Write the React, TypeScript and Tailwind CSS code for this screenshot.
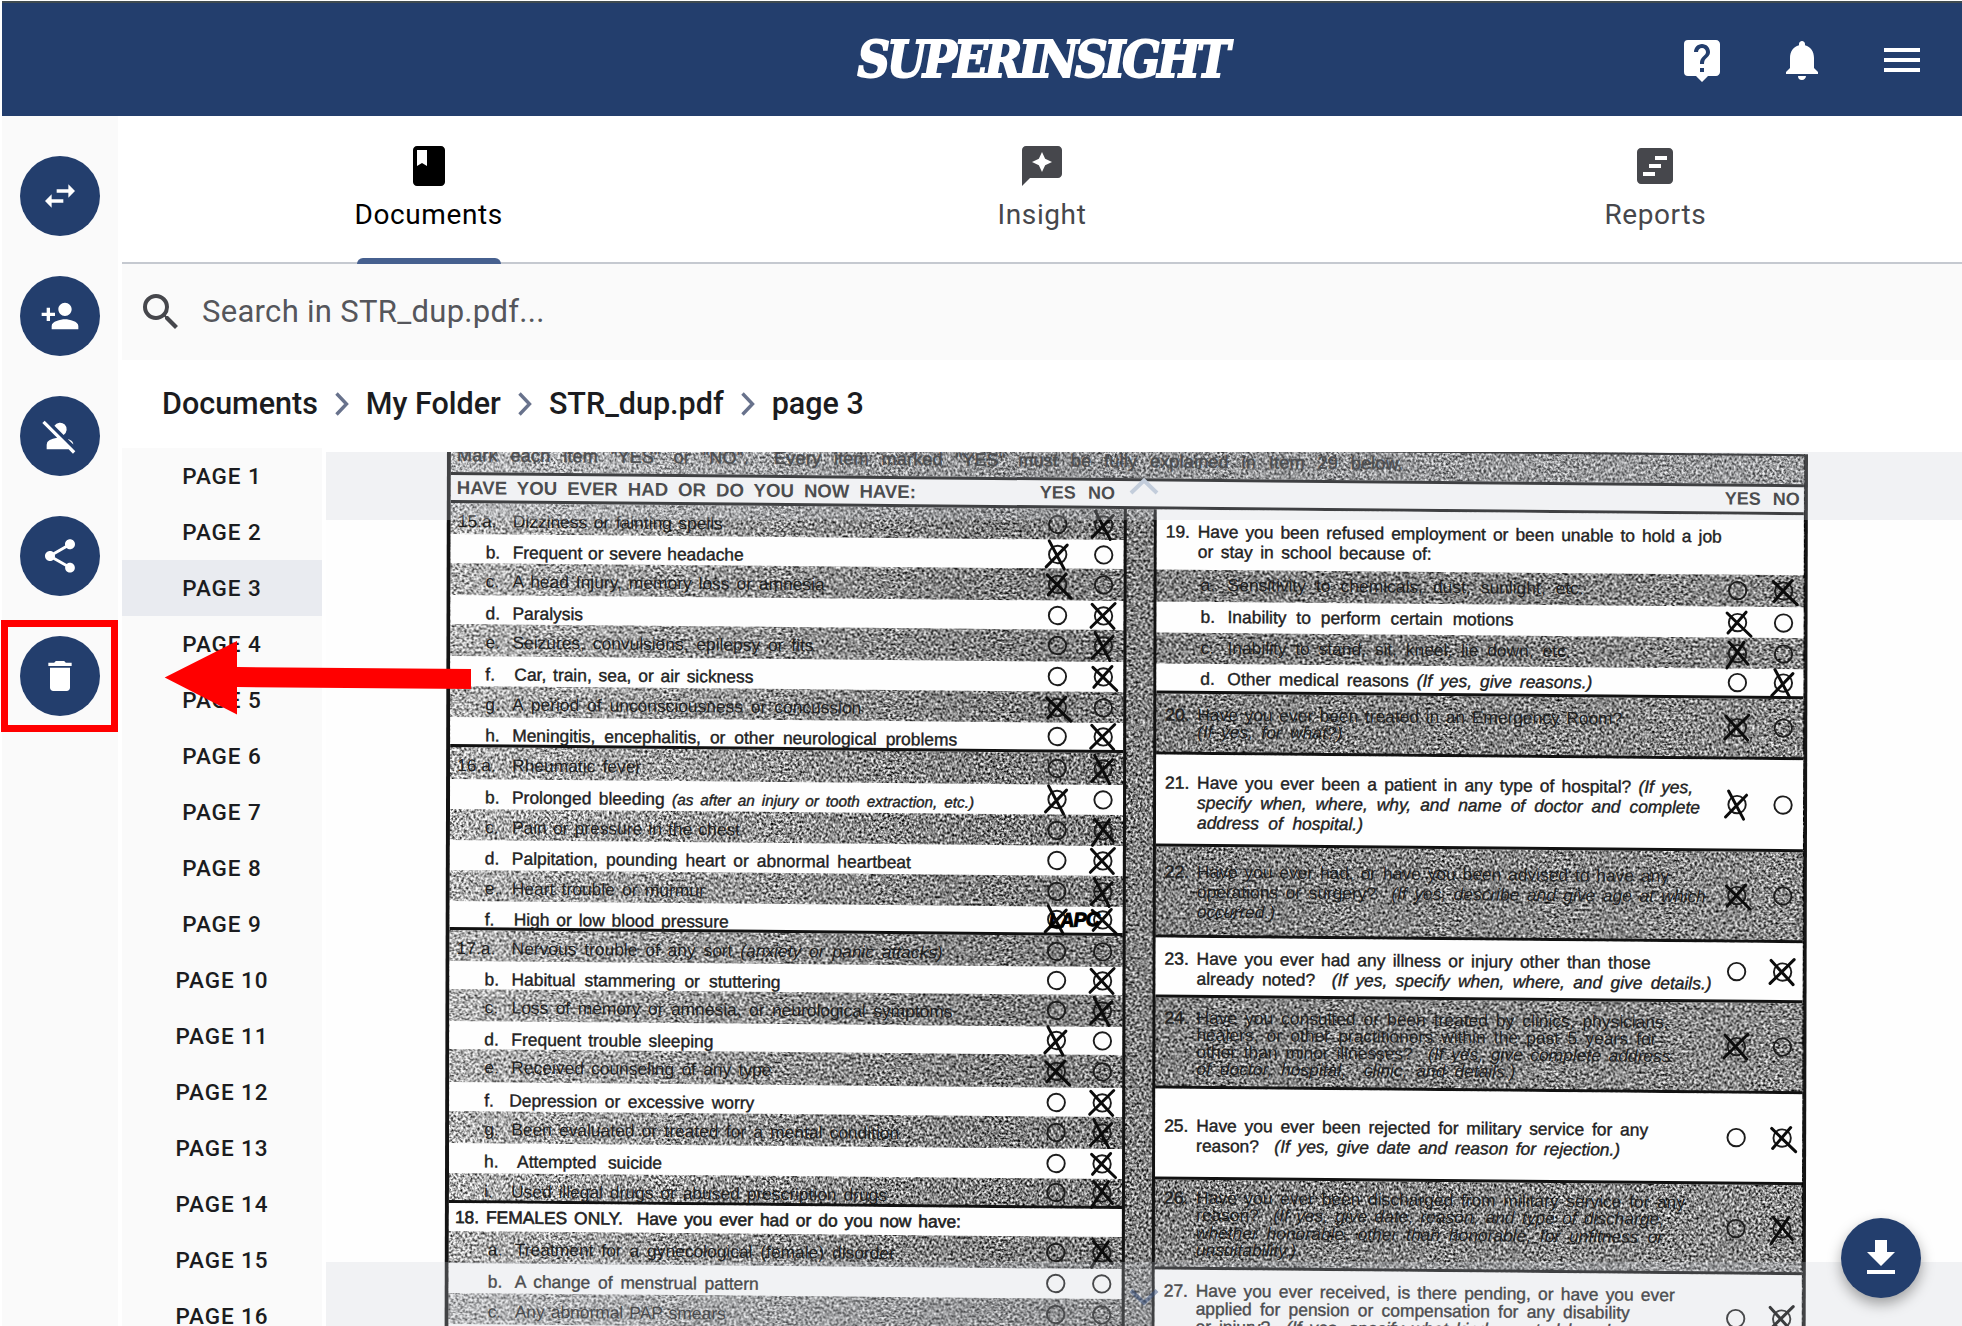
import React from "react";
import {
  MdBook,
  MdDelete,
  MdLiveHelp,
  MdMenu,
  MdNotifications,
  MdPersonAdd,
  MdPersonOff,
  MdSearch,
  MdShare,
  MdSwapHoriz,
} from "react-icons/md";

/* ---------- shell ---------- */

function Header() {
  return (
    <header className="grid h-[115px] shrink-0 grid-cols-[1fr_auto_1fr] items-center border-t-2 border-[#404b50] bg-[#233e6d] text-white">
      <span />
      <h1 className="ml-[120px] flex w-[440px] justify-center font-['DejaVu_Serif'] text-[50px] leading-none font-bold italic [-webkit-text-stroke:2px_white]">
        <span className="scale-x-[0.9] tracking-[-0.07em]">SUPERINSIGHT</span>
      </h1>
      <nav className="flex justify-end gap-[52px] pr-[36px]">
        <MdLiveHelp size={48} />
        <MdNotifications size={48} />
        <MdMenu size={48} />
      </nav>
    </header>
  );
}

const railIcons = [MdSwapHoriz, MdPersonAdd, MdPersonOff, MdShare, MdDelete];

function Rail() {
  return (
    <aside className="flex w-[116px] shrink-0 flex-col items-center gap-10 bg-[#fafafa] pt-10">
      {railIcons.map((Icon, i) => (
        <button key={i} className="flex size-20 items-center justify-center rounded-full bg-[#233e6d] text-white">
          <Icon size={40} />
        </button>
      ))}
    </aside>
  );
}

const InsightIcon = () => (
  <svg width="48" height="48" viewBox="0 0 24 24" fill="currentColor" fillRule="evenodd">
    <path d="M20 2H4c-1.1 0-2 .9-2 2v18l4-4h14c1.1 0 2-.9 2-2V4c0-1.1-.9-2-2-2zm-6.43 9.57L12 15l-1.57-3.43L7 10l3.43-1.57L12 5l1.57 3.43L17 10l-3.43 1.57z" />
  </svg>
);

const ReportsIcon = () => (
  <svg width="48" height="48" viewBox="0 0 24 24" fill="currentColor" fillRule="evenodd">
    <path d="M19 3H5c-1.1 0-2 .9-2 2v14c0 1.1.9 2 2 2h14c1.1 0 2-.9 2-2V5c0-1.1-.9-2-2-2zM12 17H6v-2h6v2zm3-4H9v-2h6v2zm3-4h-6V7h6v2z" />
  </svg>
);

function Tabs() {
  return (
    <div className="grid h-[148px] grid-cols-3 border-b-2 border-[#c5c9d0] bg-white text-[28px] leading-10 tracking-[0.6px] text-[#46474c]">
      <div className="relative flex flex-col items-center pt-[26px] text-black">
        <MdBook size={48} />
        <span className="mt-[5px]">Documents</span>
        <span className="absolute -bottom-0.5 h-1.5 w-[144px] rounded-t-md bg-[#46608f]" />
      </div>
      <div className="flex flex-col items-center pt-[26px]">
        <InsightIcon />
        <span className="mt-[5px]">Insight</span>
      </div>
      <div className="flex flex-col items-center pt-[26px]">
        <ReportsIcon />
        <span className="mt-[5px]">Reports</span>
      </div>
    </div>
  );
}

const Chevron = () => (
  <svg width="14" height="24" viewBox="0 0 14 24" fill="none" stroke="#68728c" strokeWidth="3.4">
    <path d="M1.5 1.5 11.5 12 1.5 22.5" />
  </svg>
);

function Breadcrumbs() {
  const items = ["Documents", "My Folder", "STR_dup.pdf", "page 3"];
  return (
    <div className="flex h-[88px] items-center gap-[17px] bg-white pl-[40px] text-[30.5px] font-medium text-[#1b1c20]">
      {items.map((t, i) => (
        <React.Fragment key={t}>
          {i > 0 && <Chevron />}
          <span>{t}</span>
        </React.Fragment>
      ))}
    </div>
  );
}

function PageList() {
  return (
    <ul className="w-[200px] shrink-0 bg-[#fafafa] text-center text-[22.5px] font-medium tracking-[0.9px] text-[#1b1c20]">
      {Array.from({ length: 16 }, (_, i) => (
        <li key={i} className={i === 2 ? "h-14 bg-[#e9ebf0] leading-[57px]" : "h-14 leading-[57px]"}>
          PAGE {i + 1}
        </li>
      ))}
    </ul>
  );
}

/* ---------- scanned form ---------- */

const strokes = [
  "M2 3 24 27M25 2 1 26",
  "M5 1 20 29M23 5 2 27",
  "M3 5 27 28M22 4 4 25",
  "M5 3 24 25M20 3 3 29",
];

function Bubble({ mark, kind = 0 }: { mark?: boolean; kind?: number }) {
  return (
    <svg width="20" height="20" viewBox="0 0 20 20" fill="none" className="overflow-visible">
      <circle cx="10" cy="10" r="8.7" stroke="#1c1c1c" strokeWidth="1.9" />
      {mark && (
        <path
          d={strokes[kind % 4]}
          transform="translate(-3.5 -4.5)"
          stroke="#0b0b0b"
          strokeWidth="3"
          strokeLinecap="round"
        />
      )}
    </svg>
  );
}

type Mark = "Y" | "N" | "YN" | "";

function Bubbles({ mark, kind }: { mark: Mark; kind: number }) {
  return (
    <div className="ml-auto flex shrink-0 gap-[26px] self-center pr-[10px]">
      <Bubble mark={mark.includes("Y")} kind={kind} />
      <Bubble mark={mark.includes("N")} kind={kind + 1} />
    </div>
  );
}

const Line = ({ w, children }: { w: string; children: React.ReactNode }) => (
  <span className={`block whitespace-nowrap [text-align-last:justify] ${w}`}>{children}</span>
);

type Item = { l: string; t: React.ReactNode; w: string; h: string; m: Mark; rule?: boolean; note?: string };

const leftItems: Item[] = [
  { l: "15.a.", t: "Dizziness or fainting spells", w: "w-[210px]", h: "h-[31px]", m: "N" },
  { l: "b.", t: "Frequent or severe headache", w: "w-[231px]", h: "h-[29px]", m: "Y" },
  { l: "c.", t: "A head Injury, memory loss or amnesia", w: "w-[312px]", h: "h-[32px]", m: "Y" },
  { l: "d.", t: "Paralysis", w: "w-[69px]", h: "h-[29px]", m: "N" },
  { l: "e.", t: "Seizures, convulsions, epilepsy or fits", w: "w-[301px]", h: "h-[32px]", m: "N" },
  { l: "f.", t: "Car, train, sea, or air sickness", w: "w-[239px] ml-[2px]", h: "h-[30px]", m: "N" },
  { l: "g.", t: "A period of unconsciousness or concussion", w: "w-[349px]", h: "h-[31px]", m: "Y" },
  { l: "h.", t: "Meningitis, encephalitis, or other neurological problems", w: "w-[445px]", h: "h-[30px]", m: "N", rule: true },
  { l: "16.a.", t: "Rheumatic fever", w: "w-[129px]", h: "h-[32px]", m: "N" },
  {
    l: "b.",
    t: <>Prolonged bleeding <i className="text-[15.3px]">(as after an injury or tooth extraction, etc.)</i></>,
    w: "w-[462px]",
    h: "h-[30px]",
    m: "Y",
  },
  { l: "c.", t: "Pain or pressure in the chest", w: "w-[228px]", h: "h-[31px]", m: "N" },
  { l: "d.", t: "Palpitation, pounding heart or abnormal heartbeat", w: "w-[399px]", h: "h-[30px]", m: "N" },
  { l: "e.", t: "Heart trouble or murmur", w: "w-[193px]", h: "h-[31px]", m: "N" },
  { l: "f.", t: "High or low blood pressure", w: "w-[215px] ml-[2px]", h: "h-[29px]", m: "YN", rule: true, note: "LAPC" },
  { l: "17.a.", t: <>Nervous trouble of any sort <i>(anxiety or panic attacks)</i></>, w: "w-[431px]", h: "h-[31px]", m: "" },
  { l: "b.", t: "Habitual stammering or stuttering", w: "w-[269px]", h: "h-[28px]", m: "N" },
  { l: "c.", t: "Loss of memory or amnesia, or neurological symptoms", w: "w-[441px]", h: "h-[32px]", m: "N" },
  { l: "d.", t: "Frequent trouble sleeping", w: "w-[202px]", h: "h-[28px]", m: "Y" },
  { l: "e.", t: "Received counseling of any type", w: "w-[260px]", h: "h-[33px]", m: "Y" },
  { l: "f.", t: "Depression or excessive worry", w: "w-[245px] -ml-[2px]", h: "h-[29px]", m: "N" },
  { l: "g.", t: "Been evaluated or treated for a mental condition", w: "w-[388px]", h: "h-[32px]", m: "N" },
  { l: "h.", t: "Attempted suicide", w: "w-[145px] ml-[6px]", h: "h-[30px]", m: "N" },
  { l: "i.", t: "Used illegal drugs or abused prescription drugs", w: "w-[376px]", h: "h-[30px]", m: "N", rule: true },
];

const femaleItems: Item[] = [
  { l: "a.", t: "Treatment for a gynecological (female) disorder", w: "w-[380px]", h: "h-[32px]", m: "N" },
  { l: "b.", t: "A change of menstrual pattern", w: "w-[244px]", h: "h-[30px]", m: "" },
  { l: "c.", t: "Any abnormal PAP smears", w: "w-[211px]", h: "h-[31px]", m: "" },
];

function LeftRow({ item, shaded, kind, inset }: { item: Item; shaded: boolean; kind: number; inset?: boolean }) {
  const numbered = item.l.length > 2;
  return (
    <div
      className={`flex ${item.h} ${shaded ? "text-[#1d1d1d]" : "bg-[#fefefe] [-webkit-text-stroke:0.4px_#222]"} ${
        item.rule ? "border-b-[3px] border-[#111]" : ""
      }`}
    >
      <div className={`flex pt-[3px] leading-[30px] ${inset ? "ml-[4px]" : ""}`}>
        <span className={`w-[62px] shrink-0 ${numbered ? "pl-[7px]" : "pl-[35px]"}`}>{item.l}</span>
        <Line w={item.w}>{item.t}</Line>
      </div>
      {item.note && (
        <span className="ml-auto -mr-[372px] -rotate-3 text-[20px] leading-[26px] font-bold tracking-[-1px] text-black italic [-webkit-text-stroke:1px_#000]">
          {item.note}
        </span>
      )}
      <Bubbles mark={item.m} kind={kind} />
    </div>
  );
}

function LeftColumn() {
  return (
    <div className="w-[673px] shrink-0">
      {leftItems.map((item, i) => {
        const shaded = i < 8 ? i % 2 === 0 : i < 14 ? i % 2 === 0 : i % 2 === 0;
        return <LeftRow key={i} item={item} shaded={shaded} kind={i} />;
      })}
      <div className="h-[28px] bg-[#fefefe] pl-[6px] leading-[28px] [-webkit-text-stroke:0.6px_#222]">
        <Line w="w-[506px]">18. FEMALES ONLY.&nbsp; Have you ever had or do you now have:</Line>
      </div>
      {femaleItems.map((item, i) => (
        <LeftRow key={i} item={item} shaded={i % 2 === 0} kind={i + 2} inset />
      ))}
      <div className="h-10 bg-[#fefefe]" />
    </div>
  );
}

type Question = { n: string; h: string; body: string; m: Mark; lines: [React.ReactNode, string][] };

const questions: Question[] = [
  {
    n: "20.", h: "h-[61px]", body: "pt-[13px] leading-[17px]", m: "Y",
    lines: [["Have you ever been treated in an Emergency Room?", "w-[425px]"], [<i>(If yes, for what?)</i>, "w-[145px]"]],
  },
  {
    n: "21.", h: "h-[92px]", body: "pt-[18px] leading-[20px]", m: "Y",
    lines: [
      [<>Have you ever been a patient in any type of hospital? <i>(If yes,</i></>, "w-[496px]"],
      [<i>specify when, where, why, and name of doctor and complete</i>, "w-[503px]"],
      [<i>address of hospital.)</i>, "w-[166px]"],
    ],
  },
  {
    n: "22.", h: "h-[91px]", body: "pt-[15px] leading-[20px]", m: "Y",
    lines: [
      ["Have you ever had, or have you been advised to have any", "w-[472px]"],
      [<>operations or surgery?&nbsp; <i>(If yes, describe and give age at which</i></>, "w-[509px]"],
      [<i>occurred.)</i>, "w-[82px]"],
    ],
  },
  {
    n: "23.", h: "h-[60px]", body: "pt-[11px] leading-[20px]", m: "N",
    lines: [
      ["Have you ever had any illness or injury other than those", "w-[454px]"],
      [<>already noted?&nbsp; <i>(If yes, specify when, where, and give details.)</i></>, "w-[515px]"],
    ],
  },
  {
    n: "24.", h: "h-[91px]", body: "pt-[12px] leading-[17px]", m: "Y",
    lines: [
      ["Have you consulted or been treated by clinics, physicians,", "w-[472px]"],
      ["healers, or other practitioners within the past 5 years for", "w-[460px]"],
      [<>other than minor illnesses?&nbsp; <i>(If yes, give complete address</i></>, "w-[474px]"],
      [<i>of doctor, hospital,&nbsp; clinic, and details.)</i>, "w-[319px]"],
    ],
  },
  {
    n: "25.", h: "h-[91px]", body: "pt-[27px] leading-[20px]", m: "N",
    lines: [
      ["Have you ever been rejected for military service for any", "w-[452px]"],
      [<>reason?&nbsp; <i>(If yes, give date and reason for rejection.)</i></>, "w-[424px]"],
    ],
  },
  {
    n: "26.", h: "h-[90px]", body: "pt-[10px] leading-[17.3px]", m: "N",
    lines: [
      ["Have you ever been discharged from military service for any", "w-[489px]"],
      [<>reason?&nbsp; <i>(If yes, give date, reason, and type of discharge,</i></>, "w-[468px]"],
      [<i>whether honorable, other than honorable, for unfitness or</i>, "w-[467px]"],
      [<i>unsuitability.)</i>, "w-[108px]"],
    ],
  },
  {
    n: "27.", h: "h-[91px]", body: "pt-[12px] leading-[18px]", m: "N",
    lines: [
      ["Have you ever received, is there pending, or have you ever", "w-[479px]"],
      ["applied for pension or compensation for any disability", "w-[434px]"],
      [<>or injury?&nbsp; <i>(If yes, specify what kind, granted by whom,</i></>, "w-[449px]"],
    ],
  },
];

const subItems: Item[] = [
  { l: "a.", t: "Sensitivity to chemicals, dust, sunlight, etc.", w: "w-[356px]", h: "h-[32px]", m: "N" },
  { l: "b.", t: "Inability to perform certain motions", w: "w-[286px]", h: "h-[31px]", m: "Y" },
  { l: "c.", t: "Inability to stand, sit, kneel, lie down, etc.", w: "w-[343px]", h: "h-[31px]", m: "Y" },
  { l: "d.", t: <>Other medical reasons <i>(If yes, give reasons.)</i></>, w: "w-[365px]", h: "h-[30px]", m: "N", rule: true },
];

function RightColumn() {
  return (
    <div className="min-w-0 flex-1">
      <div className="flex h-[60px] bg-[#fefefe] pt-[12px] pl-[9px] leading-[20px] [-webkit-text-stroke:0.4px_#222]">
        <span className="w-[32px]">19.</span>
        <div>
          <Line w="w-[524px]">Have you been refused employment or been unable to hold a job</Line>
          <Line w="w-[234px]">or stay in school because of:</Line>
        </div>
      </div>
      {subItems.map((s, i) => (
        <div
          key={i}
          className={`flex ${s.h} ${i % 2 ? "bg-[#fefefe] [-webkit-text-stroke:0.4px_#222]" : "text-[#1d1d1d]"} ${
            s.rule ? "border-b-[3px] border-[#111]" : ""
          }`}
        >
          <span className="w-[71px] pl-[44px] leading-[30px]">{s.l}</span>
          <div className="leading-[30px]">
            <Line w={s.w}>{s.t}</Line>
          </div>
          <Bubbles mark={s.m} kind={i + 1} />
        </div>
      ))}
      {questions.map((q, i) => (
        <div
          key={q.n}
          className={`flex border-b-[3px] border-[#111] ${q.h} ${
            i % 2 ? "bg-[#fefefe] [-webkit-text-stroke:0.4px_#222]" : "text-[#1d1d1d]"
          }`}
        >
          <div className={`flex pl-[9px] ${q.body}`}>
            <span className="w-[32px] shrink-0 [-webkit-text-stroke:0.5px_#222]">{q.n}</span>
            <div>
              {q.lines.map(([t, w], j) => (
                <Line key={j} w={w}>{t}</Line>
              ))}
            </div>
          </div>
          <Bubbles mark={q.m} kind={i} />
        </div>
      ))}
    </div>
  );
}

const YesNo = () => (
  <div className="flex gap-[12px] text-[18px] font-bold text-[#222]">
    <span>YES</span>
    <span>NO</span>
  </div>
);

function ScannedForm() {
  return (
    <div className="relative isolate -mt-[10px] ml-[121px] w-[1361px] origin-top-left border-x-4 border-[#141414] font-['Liberation_Sans'] text-[17.4px] text-[#222] [transform:matrix(1,0.009,-0.0027,1,0,0)]">
      <svg width="0" height="0" className="absolute">
        <filter id="grain" x="0" y="0" width="100%" height="100%" colorInterpolationFilters="sRGB">
          <feTurbulence type="fractalNoise" baseFrequency="0.42" numOctaves="2" seed="7" />
          <feColorMatrix values="1 0 0 0 0  1 0 0 0 0  1 0 0 0 0  0 0 0 0 1" result="n" />
          <feComposite in="SourceGraphic" in2="n" operator="arithmetic" k1="0" k2="1" k3="2" k4="-1" />
        </filter>
      </svg>
      <div className="absolute inset-0 -z-10 bg-linear-to-r from-[#b4b4b4] via-[#808080] via-40% to-[#8a8a8a] [filter:url(#grain)]" />
      <div className="h-[30px] border-t-2 border-[#111] pl-[6px] text-[18px] leading-[30px] tracking-[0.2px] [-webkit-text-stroke:0.5px_#222]">
        <span className="relative -top-[4px]">
          <Line w="w-[946px]">
            Mark each item "YES" or "NO".&nbsp; Every item marked "YES" must be fully explained in Item 29 below.
          </Line>
        </span>
      </div>
      <div className="flex h-[31px] items-center border-y-[3px] border-[#111] bg-[#fefefe]">
        <div className="ml-[6px] text-[18.6px] font-bold">
          <Line w="w-[459px]">HAVE YOU EVER HAD OR DO YOU NOW HAVE:</Line>
        </div>
        <div className="ml-[124px]">
          <YesNo />
        </div>
        <div className="mr-[4px] ml-auto">
          <YesNo />
        </div>
      </div>
      <div className="flex">
        <LeftColumn />
        <div className="w-[33px] shrink-0 border-x-[3px] border-[#111]" />
        <RightColumn />
      </div>
    </div>
  );
}

function Viewer() {
  return (
    <div className="relative mt-[3.5px] ml-1 h-[875px] min-w-0 flex-1 overflow-hidden bg-[#fefefe]">
      <ScannedForm />
      <div className="absolute inset-x-0 top-0 flex h-[68px] justify-center bg-[rgb(203_207_215/0.25)] pt-[26px]">
        <svg width="30" height="18" viewBox="0 0 30 18" fill="none" stroke="#c3cddb" strokeWidth="4">
          <path d="M2 15 15 2.5 28 15" />
        </svg>
      </div>
      <div className="absolute inset-x-0 bottom-0 flex h-[65px] justify-center bg-[rgb(203_207_215/0.25)] pt-[26px]">
        <svg width="30" height="18" viewBox="0 0 30 18" fill="none" stroke="#35507f" strokeOpacity="0.5" strokeWidth="4">
          <path d="M2 2.5 15 15 28 2.5" />
        </svg>
      </div>
      <button className="absolute right-[41px] bottom-[29px] flex size-20 items-center justify-center rounded-full bg-[#233e6d] text-white shadow-[0_6px_14px_rgb(0_0_0/0.35)]">
        <svg width="48" height="48" viewBox="0 0 24 24" fill="currentColor">
          <path d="M19 9h-4V3H9v6H5l7 7 7-7zM5 18v2h14v-2H5z" />
        </svg>
      </button>
    </div>
  );
}

/* Tutorial mark-up drawn over the app: a box round the delete button and an arrow to it. */
function Callout() {
  return (
    <>
      <div className="absolute top-[620px] left-px h-[112px] w-[117px] border-[7px] border-[#ff0000]" />
      <svg className="absolute top-[640px] left-[164px]" width="308" height="76" viewBox="164 640 308 76" fill="#ff0000">
        <path d="M164.7 677.5 237 641v26l234 2v20l-234-2v27.5z" />
      </svg>
    </>
  );
}

export default function App() {
  return (
    <div className="relative flex h-[1326px] w-[1962px] flex-col overflow-hidden bg-white pl-0.5 pt-px font-[Roboto]">
      <Header />
      <div className="flex min-h-0 flex-1">
        <Rail />
        <main className="ml-1 flex min-w-0 flex-1 flex-col">
          <Tabs />
          <div className="flex h-[96px] shrink-0 items-center bg-[#fafafa] pl-[15px] text-[#46474c]">
            <MdSearch size={48} />
            <span className="ml-[17px] text-[31px] tracking-[0.3px] text-[#55565b]">Search in STR_dup.pdf...</span>
          </div>
          <Breadcrumbs />
          <div className="flex min-h-0 flex-1 overflow-hidden">
            <PageList />
            <Viewer />
          </div>
        </main>
      </div>
      <Callout />
    </div>
  );
}
